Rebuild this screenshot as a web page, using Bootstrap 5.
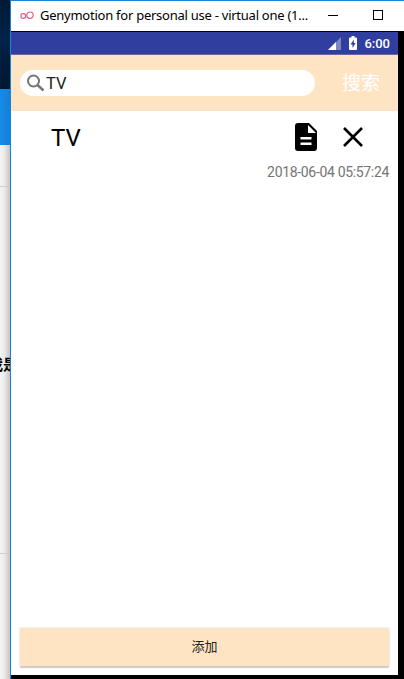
<!DOCTYPE html>
<html lang="zh-CN">
<head>
<meta charset="utf-8">
<meta name="viewport" content="width=device-width, initial-scale=1">
<title>Genymotion</title>
<link href="https://cdn.jsdelivr.net/npm/bootstrap@5.3.0/dist/css/bootstrap.min.css" rel="stylesheet">
<style>
body{width:404px;height:679px;overflow:hidden;font-family:Roboto,"Noto Sans CJK SC",sans-serif;color:#000;line-height:1}
svg{display:block;flex:none}
.behind{width:10px;background:linear-gradient(90deg,#f5f5f5 0,#eaeaea 45%,#c4c4c4 100%)}
.behind-dark{height:89px;background:linear-gradient(#001a35,#00234a 45%,#001c3c 70%,#001832)}
.behind-blue{height:56px;background:linear-gradient(90deg,#168be8,#1580d5)}
.behind-gap{height:41px;border-bottom:1px solid #d0d0d0;box-sizing:content-box}
.behind-text{height:367px;border-bottom:1px solid #d0d0d0;padding-top:169px}
.behind-text span{display:block;width:32px;margin-left:-12px;font:bold 15px/16px "Noto Sans CJK SC",sans-serif;white-space:nowrap}
.win{border-left:1px solid #1883d7;border-top:1px solid #1883d7;background:#000;min-width:0}
.titlebar{height:30px;background:#fff}
.title-icon{margin:10px 0 0 9px}
.title-text{margin:7px 0 0 6px;width:270px;font:13px/15px "Noto Sans",sans-serif;letter-spacing:-.25px;white-space:nowrap}
.device{width:387px;height:643px;margin-top:1px;background:#fff}
.status{height:23px;background:#303f9f;border-bottom:1px solid #6c6898;color:#fff;padding-right:8px}
.clock{font-size:13px;font-weight:500;margin-left:7px}
.search{height:56px;background:#ffe4c4;padding-left:9px}
.field{width:295px;height:26px;background:#fff;padding-left:7px;font-size:16.5px;color:#222}
.field span{padding:2px 0 0 1px}
.go{width:38px;margin-left:27px;font-size:19px;color:#fff;white-space:nowrap}
.item-row{height:52px;padding:0 35px 0 41px;font-size:24px}
.item-name{margin-left:-1px;padding-top:1px}
.cross{margin-left:26px}
.stamp{font-size:14px;letter-spacing:-.33px;color:#757575;padding:2px 9px 0 0}
.add{margin:0 9px;margin-bottom:9px;height:38px;background:#ffe4c4;color:#222;font-size:13px;border-radius:1px;box-shadow:0 2px 1px #cbcbcb,0 0 2px #ccc}
</style>
</head>
<body class="d-flex">
<aside class="behind flex-shrink-0 overflow-hidden">
  <div class="behind-dark"></div><div class="behind-blue"></div><div class="behind-gap"></div>
  <div class="behind-text"><span>我是</span></div>
</aside>
<main class="win flex-grow-1">
  <header class="titlebar d-flex">
    <svg class="title-icon" width="14" height="10" fill="none" stroke="#e0608c" stroke-width="1.2"><circle cx="3.3" cy="5" r="2.400"/><circle cx="10" cy="4.200" r="3.200"/></svg>
    <div class="title-text">Genymotion for personal use - virtual one (1...</div>
    <svg width="80" height="30" fill="none" stroke="#000" shape-rendering="crispEdges"><path d="M18 14.500h10M63.500 9.500h9v9h-9z"/></svg>
  </header>
  <section class="device d-flex flex-column">
    <div class="status d-flex align-items-center justify-content-end">
      <svg width="13" height="13"><path d="M13 0v13H0z" fill="#7c86c3"/><path d="M8 5v8H0z" fill="#fff"/></svg>
      <svg class="ms-2" width="8" height="14"><path d="M1 1.500h1.500V0h3v1.500H7q1 0 1 1V13q0 1-1 1H1q-1 0-1-1V2.500q0-1 1-1z" fill="#fff"/><path d="M4.800 3.500 1.500 8.500h2v3.500l3.200-5h-1.900z" fill="#303f9f"/></svg>
      <span class="clock">6:00</span>
    </div>
    <div class="search d-flex align-items-center">
      <div class="field rounded-pill d-flex align-items-center">
        <svg width="18" height="18" fill="none" stroke="#757575" stroke-width="2"><circle cx="6.500" cy="7" r="5.500"/><path d="m10.500 11 6 5.500" stroke-width="2.500"/></svg><span>TV</span>
      </div>
      <div class="go">搜索</div>
    </div>
    <div class="item-row d-flex align-items-center">
      <span class="item-name flex-grow-1">TV</span>
      <svg width="22" height="28"><path d="M3 0h11l8 8v17q0 3-3 3H3q-3 0-3-3V3q0-3 3-3z"/><path d="M13 2v8h8zM5.500 14h11v2.500h-11zM5.500 19.500h11V22h-11z" fill="#fff"/></svg>
      <svg class="cross" width="20" height="20" stroke="#000" stroke-width="2.600"><path d="m1 1 18 18M19 1 1 19"/></svg>
    </div>
    <div class="stamp text-end">2018-06-04 05:57:24</div>
    <button class="add btn border-0 p-0 mt-auto">添加</button>
  </section>
</main>
<script src="https://cdn.jsdelivr.net/npm/bootstrap@5.3.0/dist/js/bootstrap.bundle.min.js"></script>
</body>
</html>
